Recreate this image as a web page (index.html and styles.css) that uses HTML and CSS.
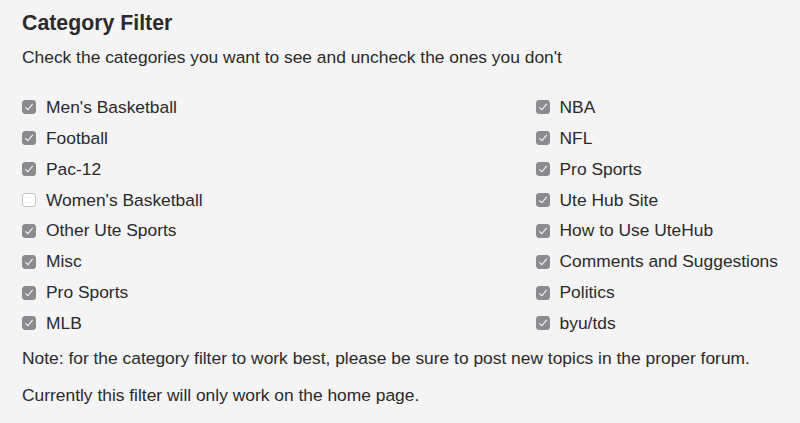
FILE: index.html
```html
<!DOCTYPE html>
<html>
<head>
<meta charset="utf-8">
<link rel="stylesheet" href="styles.css">
</head>
<body>
<div class="page">
  <h1 class="title">Category Filter</h1>
  <p class="lead">Check the categories you want to see and uncheck the ones you don't</p>
  <div class="cols">
    <ul class="col">
      <li class="item"><span class="box on"></span>Men's Basketball</li>
      <li class="item"><span class="box on"></span>Football</li>
      <li class="item"><span class="box on"></span>Pac-12</li>
      <li class="item"><span class="box"></span>Women's Basketball</li>
      <li class="item"><span class="box on"></span>Other Ute Sports</li>
      <li class="item"><span class="box on"></span>Misc</li>
      <li class="item"><span class="box on"></span>Pro Sports</li>
      <li class="item"><span class="box on"></span>MLB</li>
    </ul>
    <ul class="col">
      <li class="item"><span class="box on"></span>NBA</li>
      <li class="item"><span class="box on"></span>NFL</li>
      <li class="item"><span class="box on"></span>Pro Sports</li>
      <li class="item"><span class="box on"></span>Ute Hub Site</li>
      <li class="item"><span class="box on"></span>How to Use UteHub</li>
      <li class="item"><span class="box on"></span>Comments and Suggestions</li>
      <li class="item"><span class="box on"></span>Politics</li>
      <li class="item"><span class="box on"></span>byu/tds</li>
    </ul>
  </div>
  <p class="note">Note: for the category filter to work best, please be sure to post new topics in the proper forum.</p>
  <p class="note">Currently this filter will only work on the home page.</p>
</div>
</body>
</html>
```

FILE: styles.css
```css
html, body {
  margin: 0;
  padding: 0;
  background: #f4f4f4;
}
body {
  font-family: "Liberation Sans", Arial, sans-serif;
  color: #2a2a2a;
  width: 800px;
  height: 423px;
  overflow: hidden;
}
.page {
  padding: 10px 22px 0 22px;
}
.title {
  margin: 0;
  font-size: 21.3px;
  font-weight: bold;
  line-height: 26px;
  color: #2b2b2b;
}
.lead {
  margin: 11px 0 0;
  font-size: 17.4px;
  line-height: 20px;
}
.cols {
  display: flex;
  justify-content: space-between;
  margin-top: 25px;
}
.col {
  list-style: none;
  margin: 0;
  padding: 0;
}
.item {
  display: flex;
  align-items: center;
  height: 30.86px;
  font-size: 17.4px;
}
.box {
  width: 12px;
  height: 12px;
  border: 1px solid #c4c4c4;
  border-radius: 3px;
  background: #fff;
  margin-right: 10px;
  position: relative;
  box-sizing: content-box;
  flex: none;
}
.box.on {
  background: #8b8b8f;
  border-color: #8b8b8f;
}
.box.on::after {
  content: "";
  position: absolute;
  left: 4px;
  top: 1px;
  width: 3px;
  height: 7px;
  border: solid #fff;
  border-width: 0 1.5px 1.5px 0;
  transform: rotate(40deg);
}
.note {
  margin: 9px 0 0;
  font-size: 17.4px;
  line-height: 20px;
}
.note + .note {
  margin-top: 17px;
}
```
